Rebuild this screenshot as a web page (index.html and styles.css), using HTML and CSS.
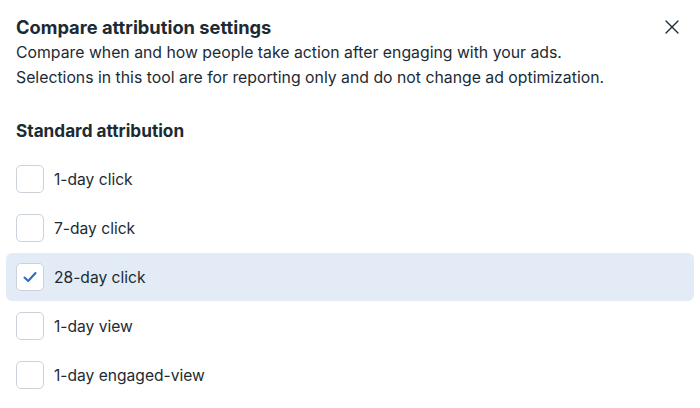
FILE: index.html
```html
<!DOCTYPE html>
<html lang="en">
<head>
    <meta charset="UTF-8">
    <meta name="viewport" content="width=device-width, initial-scale=1.0">
    <title>Compare attribution settings</title>
    <link rel="stylesheet" href="styles.css">
</head>
<body>
    <div class="dialog">
        <div class="header">
            <h1>Compare attribution settings</h1>
            <button class="close" aria-label="Close">
                <svg width="16" height="16" viewBox="0 0 16 16">
                    <path d="M2 2 L14 14 M14 2 L2 14" stroke="#1c2b33" stroke-width="1.4" stroke-linecap="round"/>
                </svg>
            </button>
        </div>
        <p class="intro">Compare when and how people take action after engaging with your ads.<br>Selections in this tool are for reporting only and do not change ad optimization.</p>

        <h2>Standard attribution</h2>
        <div class="options">
            <label class="option">
                <span class="box"></span>
                <span>1-day click</span>
            </label>
            <label class="option">
                <span class="box"></span>
                <span>7-day click</span>
            </label>
            <label class="option selected">
                <span class="box">
                    <svg width="18" height="18" viewBox="0 0 18 18">
                        <path d="M3.5 9.5 L7.2 13 L14.5 5" fill="none" stroke="#2f6cc0" stroke-width="2.1" stroke-linecap="round" stroke-linejoin="round"/>
                    </svg>
                </span>
                <span>28-day click</span>
            </label>
            <label class="option">
                <span class="box"></span>
                <span>1-day view</span>
            </label>
            <label class="option">
                <span class="box"></span>
                <span>1-day engaged-view</span>
            </label>
        </div>
    </div>
</body>
</html>
```

FILE: styles.css
```css
body {
    font-family: Inter, "Noto Sans", sans-serif;
    color: #1c2b33;
    margin: 0;
    background: #fff;
}
.dialog {
    padding: 14px 6px 0 6px;
}
.header {
    display: flex;
    justify-content: space-between;
    align-items: center;
    padding: 0 14px 0 10px;
}
h1 {
    font-size: 18.3px;
    font-weight: 700;
    line-height: 26px;
    margin: 0;
}
.close {
    background: none;
    border: none;
    padding: 0;
    width: 16px;
    height: 16px;
    cursor: pointer;
}
.intro {
    font-size: 15.8px;
    line-height: 25px;
    margin: 0 0 0 10px;
}
h2 {
    font-size: 17.2px;
    font-weight: 700;
    line-height: 24px;
    margin: 29px 0 0 10px;
}
.options {
    display: flex;
    flex-direction: column;
    gap: 1px;
    margin-top: 12px;
}
.option {
    display: flex;
    align-items: center;
    gap: 10px;
    height: 48px;
    padding: 0 10px;
    border-radius: 6px;
    font-size: 15.6px;
    cursor: pointer;
}
.option.selected {
    background: #e3ecf6;
}
.box {
    width: 26px;
    height: 26px;
    border: 1px solid #cbd2d9;
    border-radius: 5px;
    background: #fff;
    display: flex;
    align-items: center;
    justify-content: center;
    flex-shrink: 0;
}
```
